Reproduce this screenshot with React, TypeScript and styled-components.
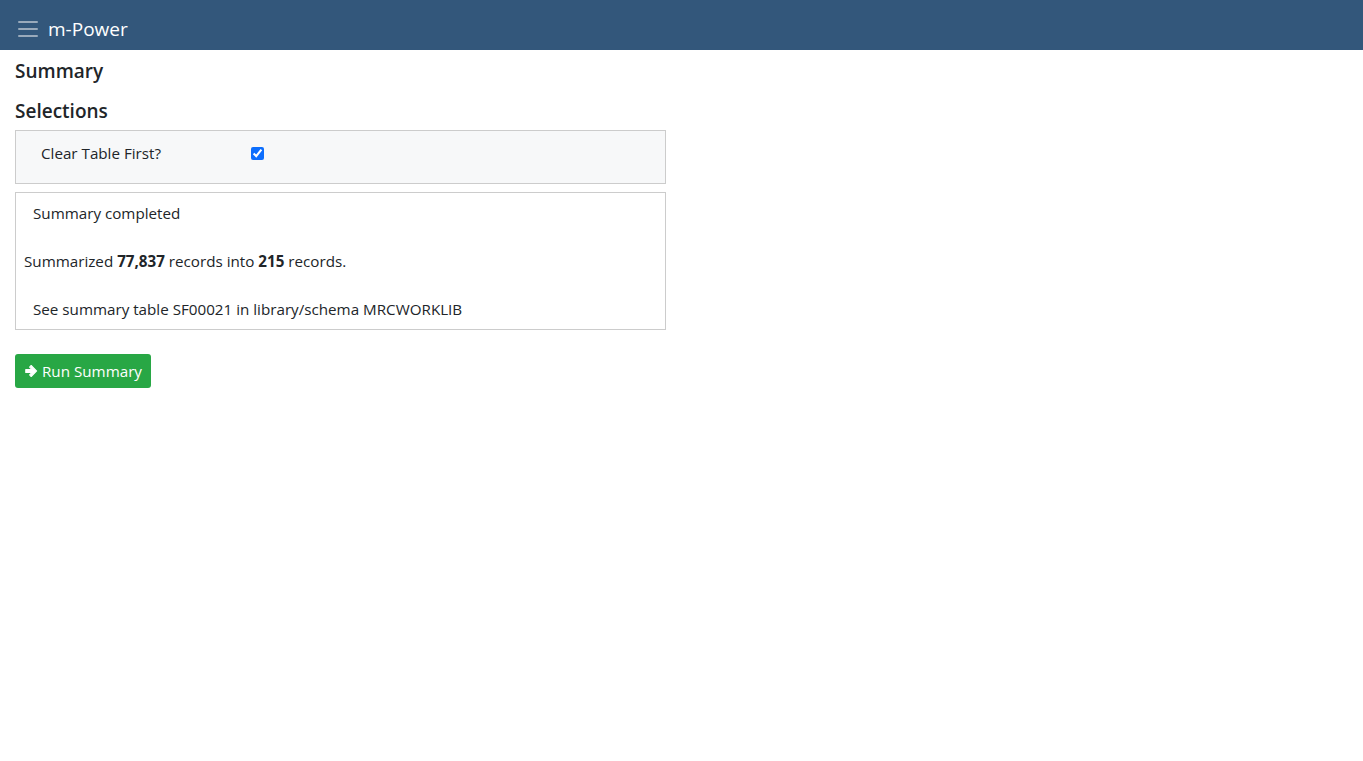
import React, { useState } from 'react';
import styled, { createGlobalStyle } from 'styled-components';

const GlobalStyle = createGlobalStyle`
  html, body {
    margin: 0;
    padding: 0;
    background: #fff;
    font-family: "Open Sans", "Noto Sans", sans-serif;
    color: #212529;
  }
`;

const NavBar = styled.header`
  height: 50px;
  background: #33577b;
  display: flex;
  align-items: center;
  padding: 8px 18px 0;
  box-sizing: border-box;
  gap: 10px;
`;

const MenuButton = styled.button`
  border: none;
  background: none;
  padding: 0;
  width: 20px;
  height: 16px;
  display: flex;
  flex-direction: column;
  justify-content: space-between;
  cursor: pointer;

  span {
    display: block;
    height: 2px;
    background: #9aaabb;
    border-radius: 1px;
  }
`;

const Brand = styled.div`
  color: #fff;
  font-size: 19px;
  line-height: 1;
`;

const Main = styled.main`
  padding: 8px 15px;
  width: 651px;
`;

const Heading = styled.h2<{ $gap?: number }>`
  margin: 0 0 ${(p) => p.$gap ?? 0}px;
  font-size: 19px;
  font-weight: 600;
  line-height: 26px;
`;

const Panel = styled.section<{ $muted?: boolean }>`
  border: 1px solid #cccccc;
  background: ${(p) => (p.$muted ? '#f7f8f9' : '#fff')};
`;

const Stack = styled.div`
  display: flex;
  flex-direction: column;
  gap: 8px;
`;

const SelectRow = styled.label`
  display: grid;
  grid-template-columns: 210px auto;
  align-items: center;
  height: 44px;
  margin-bottom: 8px;
  padding-left: 25px;
  font-size: 15.2px;
  cursor: pointer;

  input {
    width: 13px;
    height: 13px;
    margin: 0;
    accent-color: #0d6efd;
  }
`;

const Message = styled.p<{ $indent?: number }>`
  margin: 0;
  line-height: 40px;
  padding-left: ${(p) => p.$indent ?? 17}px;
  font-size: 15.2px;

  b {
    font-weight: 700;
  }
`;

const RunButton = styled.button`
  margin-top: 24px;
  display: inline-flex;
  align-items: center;
  gap: 4px;
  height: 34px;
  padding: 0 9px;
  background: #28a745;
  color: #fff;
  border: none;
  border-radius: 3px;
  font-family: inherit;
  font-size: 15.2px;
  cursor: pointer;
`;

// chunky right arrow, like the Font Awesome 4 glyph
const ArrowIcon = () => (
  <svg width="14" height="14" viewBox="0 0 16 16" aria-hidden="true">
    <path
      d="M2 6.3h7.2L6.4 3.5 8.2 1.7 14.5 8l-6.3 6.3-1.8-1.8 2.8-2.8H2z"
      fill="currentColor"
      stroke="currentColor"
      strokeWidth="1.2"
      strokeLinejoin="round"
    />
  </svg>
);

export default function App() {
  const [clearFirst, setClearFirst] = useState(true);

  return (
    <>
      <GlobalStyle />
      <NavBar>
        <MenuButton aria-label="Menu">
          <span />
          <span />
          <span />
        </MenuButton>
        <Brand>m-Power</Brand>
      </NavBar>
      <Main>
        <Heading $gap={14}>Summary</Heading>
        <Heading $gap={6}>Selections</Heading>
        <Stack>
          <Panel $muted>
            <SelectRow>
              <span>Clear Table First?</span>
              <input
                type="checkbox"
                checked={clearFirst}
                onChange={(e) => setClearFirst(e.target.checked)}
              />
            </SelectRow>
          </Panel>
          <Panel>
            <Stack>
              <Message>Summary completed</Message>
              <Message $indent={8}>
                Summarized <b>77,837</b> records into <b>215</b> records.
              </Message>
              <Message>See summary table SF00021 in library/schema MRCWORKLIB</Message>
            </Stack>
          </Panel>
        </Stack>
        <RunButton>
          <ArrowIcon />
          Run Summary
        </RunButton>
      </Main>
    </>
  );
}
